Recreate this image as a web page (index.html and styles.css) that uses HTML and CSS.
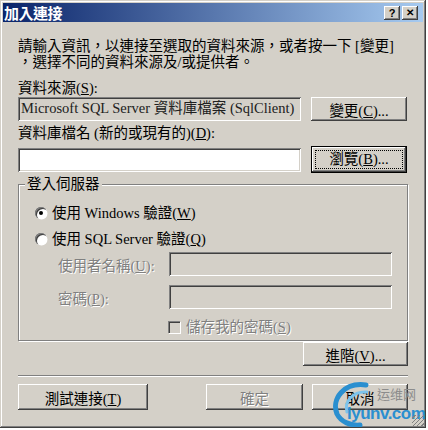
FILE: index.html
```html
<!DOCTYPE html>
<html lang="zh-Hant">
<head>
  <meta charset="UTF-8" />
  <title>加入連接</title>
  <link rel="stylesheet" href="styles.css">
</head>
<body>
  <div class="window">
    <div class="titlebar">
      <span class="title">加入連接</span>
      <div class="title-buttons">
        <span class="tbtn">?</span>
        <span class="tbtn close">&#x2715;</span>
      </div>
    </div>

    <div class="content">
      <p class="intro">請輸入資訊，以連接至選取的資料來源，或者按一下 [變更]<br>，選擇不同的資料來源及/或提供者。</p>

      <div class="label first">資料來源(<u>S</u>):</div>
      <div class="row">
        <div class="field readonly">Microsoft SQL Server 資料庫檔案 (SqlClient)</div>
        <button class="btn side">變更(<u>C</u>)...</button>
      </div>

      <div class="label second">資料庫檔名 (新的或現有的)(<u>D</u>):</div>
      <div class="row browse-row">
        <div class="field"></div>
        <button class="btn side default"><span class="focus">瀏覽(<u>B</u>)...</span></button>
      </div>

      <fieldset class="group">
        <legend>登入伺服器</legend>
        <div class="radio-row first-radio">
          <span class="radio checked"></span>
          <span>使用 Windows 驗證(<u>W</u>)</span>
        </div>
        <div class="radio-row">
          <span class="radio"></span>
          <span>使用 SQL Server 驗證(<u>Q</u>)</span>
        </div>
        <div class="cred-row user-row">
          <span class="disabled">使用者名稱(<u>U</u>):</span>
          <div class="field disabled-field"></div>
        </div>
        <div class="cred-row pw-row">
          <span class="disabled">密碼(<u>P</u>):</span>
          <div class="field disabled-field"></div>
        </div>
        <div class="check-row">
          <span class="checkbox"></span>
          <span class="disabled">儲存我的密碼(<u>S</u>)</span>
        </div>
      </fieldset>

      <div class="adv-row">
        <button class="btn adv">進階(<u>V</u>)...</button>
      </div>

      <div class="separator"></div>

      <div class="footer">
        <button class="btn test">測試連接(<u>T</u>)</button>
        <div class="footer-right">
          <button class="btn ok"><span class="disabled">確定</span></button>
          <button class="btn cancel">取消</button>
        </div>
      </div>
    </div>

    <div class="watermark">
      <svg width="48" height="46" viewBox="0 0 48 46">
        <path d="M36 4 C14 1 1 18 7 33 C11 41 21 45 30 44" fill="none" stroke="#2a8fd0" stroke-width="5" stroke-linecap="round"/>
        <path d="M37 11 C23 10 14 20 17 31" fill="none" stroke="#7cc3ec" stroke-width="3" stroke-linecap="round"/>
      </svg>
      <span class="wm-cn">运维网</span>
      <span class="wm-en">lyunv.com</span>
      <span class="wm-grip"></span>
    </div>
  </div>
</body>
</html>
```

FILE: styles.css
```css
* {
  box-sizing: border-box;
}

body {
  margin: 0;
  background: #ffffff;
  font-family: "Liberation Serif", "Noto Sans CJK TC", serif;
  font-size: 14.5px;
  color: #000;
}

u {
  text-decoration: underline;
  text-underline-offset: 1px;
}

.window {
  position: relative;
  width: 426px;
  height: 428px;
  background: #d4d0c8;
  padding: 3px;
  box-shadow: inset -1px -1px #404040, inset 1px 1px #d4d0c8,
              inset -2px -2px #808080, inset 2px 2px #ffffff;
}

.titlebar {
  height: 19px;
  display: flex;
  align-items: center;
  justify-content: space-between;
  padding: 0 5px 0 1px;
  background: linear-gradient(to right, #0a246a, #a6caf0);
}

.title {
  color: #fff;
  font-family: "Noto Sans CJK TC", sans-serif;
  font-weight: bold;
  font-size: 15px;
  line-height: 19px;
  letter-spacing: -0.5px;
}

.title-buttons {
  display: flex;
  gap: 2px;
}

.tbtn {
  width: 16px;
  height: 14px;
  background: #d4d0c8;
  font-family: "Liberation Sans", sans-serif;
  font-weight: bold;
  font-size: 11px;
  line-height: 14px;
  text-align: center;
  box-shadow: inset -1px -1px #404040, inset 1px 1px #ffffff,
              inset -2px -2px #808080;
}

.tbtn.close {
  font-size: 10px;
}

.content {
  padding: 16px 15px 0 15px;
}

.intro {
  margin: 0;
  line-height: 16px;
}

.label {
  line-height: 16px;
}

.label.first {
  margin-top: 10px;
}

.label.second {
  margin-top: 4px;
}

.row {
  display: flex;
  align-items: center;
  gap: 10px;
  margin-top: 1px;
}

.browse-row {
  margin-top: 5px;
  height: 27px;
}

.field {
  width: 283px;
  height: 24px;
  background: #fff;
  padding: 2px 3px;
  line-height: 18px;
  white-space: nowrap;
  overflow: hidden;
  box-shadow: inset 1px 1px #808080, inset -1px -1px #ffffff,
              inset 2px 2px #404040, inset -2px -2px #d4d0c8;
}

.field.readonly {
  background: #d4d0c8;
  color: #202020;
}

.btn {
  height: 24px;
  padding: 0;
  border: none;
  background: #d4d0c8;
  font: inherit;
  color: #000;
  box-shadow: inset -1px -1px #404040, inset 1px 1px #ffffff,
              inset -2px -2px #808080, inset 2px 2px #d4d0c8;
}

.btn.side {
  width: 96px;
}

.btn.default {
  height: 27px;
  box-shadow: inset 0 0 0 1px #000, inset -2px -2px #404040, inset 2px 2px #ffffff,
              inset -3px -3px #808080;
}

.focus {
  display: block;
  margin: 4px;
  height: 19px;
  line-height: 17px;
  border: 1px dotted #000;
}

.group {
  margin: 3px 0 0 0;
  padding: 0 15px 5px 6px;
  border: 1px solid #808080;
  box-shadow: inset 1px 1px #ffffff, 1px 1px #ffffff;
  min-width: 0;
}

.group legend {
  padding: 0 2px;
  line-height: 16px;
  background: #d4d0c8;
}

.radio-row {
  display: flex;
  align-items: center;
  gap: 5px;
  margin-top: 10px;
  margin-left: 10px;
  line-height: 16px;
}

.radio-row.first-radio {
  margin-top: 13px;
}

.radio {
  position: relative;
  width: 12px;
  height: 12px;
  border-radius: 50%;
  background: #fff;
  box-shadow: inset 1px 1px #808080, inset 2px 2px #404040, 0.5px 0.5px #ffffff;
}

.radio.checked::after {
  content: "";
  position: absolute;
  left: 4px;
  top: 4px;
  width: 4px;
  height: 4px;
  border-radius: 50%;
  background: #000;
}

.cred-row {
  display: flex;
  align-items: center;
  justify-content: space-between;
  margin-left: 33px;
}

.user-row {
  margin-top: 5px;
}

.pw-row {
  margin-top: 9px;
}

.disabled-field {
  width: 223px;
  background: #d4d0c8;
}

.disabled {
  color: #808080;
  text-shadow: 1px 1px #ffffff;
}

.check-row {
  display: flex;
  align-items: center;
  gap: 6px;
  margin-top: 10px;
  margin-left: 143px;
  line-height: 16px;
}

.checkbox {
  width: 12px;
  height: 12px;
  background: #d4d0c8;
  box-shadow: inset 1px 1px #808080, inset 2px 2px #404040, 1px 1px #ffffff;
}

.adv-row {
  display: flex;
  justify-content: flex-end;
  margin-top: 1px;
}

.btn.adv {
  width: 105px;
}

.separator {
  margin-top: 9px;
  height: 2px;
  border-top: 1px solid #808080;
  border-bottom: 1px solid #ffffff;
}

.footer {
  display: flex;
  justify-content: space-between;
  margin-top: 7px;
}

.footer .btn {
  height: 26px;
}

.btn.test {
  width: 130px;
}

.footer-right {
  display: flex;
  gap: 9px;
}

.btn.ok {
  width: 97px;
}

.btn.cancel {
  width: 96px;
}

.watermark {
  position: absolute;
  left: 330px;
  top: 381px;
  width: 96px;
  height: 46px;
  pointer-events: none;
}

.watermark svg {
  position: absolute;
  left: 0;
  top: 0;
}

.wm-cn {
  position: absolute;
  left: 47px;
  top: 5px;
  font-family: "Noto Sans CJK SC", sans-serif;
  font-size: 13px;
  line-height: 16px;
  color: #8c8c8c;
}

.wm-en {
  position: absolute;
  left: 17px;
  top: 24px;
  font-family: "Liberation Sans", sans-serif;
  font-weight: bold;
  font-size: 17px;
  line-height: 18px;
  color: #2a8fd0;
  letter-spacing: -0.5px;
}

.wm-grip {
  position: absolute;
  right: 2px;
  bottom: 0;
  width: 12px;
  height: 12px;
  background: repeating-linear-gradient(135deg, transparent 0 2px, #808080 2px 3px);
}
```
